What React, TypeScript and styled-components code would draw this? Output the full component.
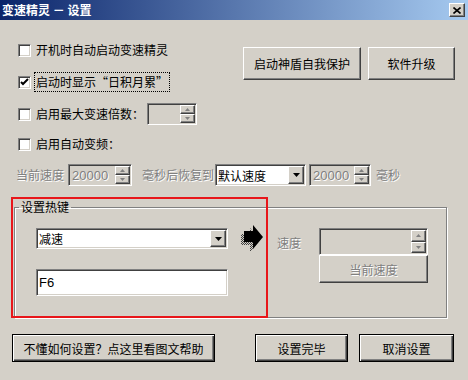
import React from 'react';
import styled, { createGlobalStyle, css } from 'styled-components';

const GlobalStyle = createGlobalStyle`
  html, body {
    margin: 0;
    padding: 0;
  }
  body {
    background: #d4d0c8;
    font-family: "Noto Sans CJK SC", "Liberation Sans", sans-serif;
    font-size: 12px;
    color: #000;
  }
  * {
    box-sizing: border-box;
  }
`;

// classic win32 bevels
const sunken = css`
  border: 1px solid;
  border-color: #808080 #fff #fff #808080;
  box-shadow: inset 1px 1px #404040, inset -1px -1px #d4d0c8;
  padding: 1px;
`;

const raised = css`
  border: 1px solid;
  border-color: #fff #404040 #404040 #fff;
  box-shadow: inset -1px -1px #808080, inset 1px 1px #d4d0c8;
`;

const disabledText = css`
  color: #808080;
  text-shadow: 1px 1px 0 #fff;
`;

const Window = styled.div`
  width: 468px;
  height: 380px;
  background: #d4d0c8;
  display: flex;
  flex-direction: column;
  overflow: hidden;
`;

const TitleBar = styled.div`
  height: 20px;
  flex: none;
  display: flex;
  align-items: center;
  justify-content: space-between;
  padding: 0 3px 0 2px;
  background: linear-gradient(to right, #0a246a, #a6caf0);
  color: #fff;
  font-weight: bold;
  font-size: 12px;
  line-height: 14px;
  white-space: pre;
`;

const CloseButton = styled.div`
  ${raised};
  width: 16px;
  height: 14px;
  background: #d4d0c8;
  display: flex;
  align-items: center;
  justify-content: center;
`;

const Body = styled.div`
  display: flex;
  flex-direction: column;
  padding: 20px 13px 0 12px;
`;

const TopArea = styled.div`
  display: flex;
  justify-content: space-between;
`;

const CheckColumn = styled.div`
  display: flex;
  flex-direction: column;
`;

const Row = styled.div<{ $gap?: number; $h?: number; $indent?: number }>`
  display: flex;
  align-items: center;
  height: ${({ $h }) => $h ?? 20}px;
  margin-top: ${({ $gap }) => $gap ?? 0}px;
  padding-left: ${({ $indent }) => $indent ?? 6}px;
  white-space: nowrap;
`;

const CheckBoxBox = styled.div`
  ${sunken};
  width: 13px;
  height: 13px;
  background: #fff;
  margin-right: 5px;
  display: flex;
  align-items: center;
  justify-content: center;
  padding: 0;
`;

const Label = styled.span<{ $disabled?: boolean; $focus?: boolean; $w?: number }>`
  line-height: 16px;
  ${({ $disabled }) => $disabled && disabledText};
  ${({ $w }) => $w && `width: ${$w}px;`};
  ${({ $focus }) =>
    $focus &&
    css`
      outline: 1px dotted #000;
      outline-offset: 1px;
    `};
`;

const TopButtons = styled.div`
  display: flex;
  gap: 7px;
  margin-top: 7px;
`;

const Button = styled.div<{ $w: number; $h?: number; $default?: boolean; $disabled?: boolean }>`
  ${raised};
  width: ${({ $w }) => $w}px;
  height: ${({ $h }) => $h ?? 33}px;
  display: flex;
  align-items: center;
  justify-content: center;
  background: #d4d0c8;
  white-space: nowrap;
  ${({ $disabled }) => $disabled && disabledText};
  ${({ $default }) =>
    $default &&
    css`
      border: 1px solid #000;
      box-shadow: inset 1px 1px #fff, inset -1px -1px #404040, inset -2px -2px #808080;
    `};
`;

const SpinBox = styled.div<{ $w: number; $h: number; $ml?: number }>`
  ${sunken};
  width: ${({ $w }) => $w}px;
  height: ${({ $h }) => $h}px;
  margin-left: ${({ $ml }) => $ml ?? 0}px;
  background: #d4d0c8;
  display: flex;
`;

const SpinValue = styled.span`
  flex: 1;
  display: flex;
  align-items: center;
  padding-left: 2px;
  ${disabledText};
  font-family: "Liberation Sans", sans-serif;
  font-size: 13px;
`;

const SpinButtons = styled.div`
  width: 15px;
  display: flex;
  flex-direction: column;
`;

const SpinButton = styled.div`
  ${raised};
  flex: 1;
  background: #d4d0c8;
  display: flex;
  align-items: center;
  justify-content: center;
`;

const Combo = styled.div<{ $w: number; $h: number; $ml?: number }>`
  ${sunken};
  width: ${({ $w }) => $w}px;
  height: ${({ $h }) => $h}px;
  margin-left: ${({ $ml }) => $ml ?? 0}px;
  background: #fff;
  display: flex;
`;

const ComboText = styled.span`
  flex: 1;
  display: flex;
  align-items: center;
  padding-left: 1px;
`;

const ComboButton = styled.div`
  ${raised};
  width: 16px;
  background: #d4d0c8;
  display: flex;
  align-items: center;
  justify-content: center;
`;

const TextBox = styled.div<{ $w: number; $h: number }>`
  ${sunken};
  width: ${({ $w }) => $w}px;
  height: ${({ $h }) => $h}px;
  background: #fff;
  display: flex;
  align-items: center;
  padding-left: 2px;
  font-family: "Liberation Sans", sans-serif;
  font-size: 13px;
`;

const GroupWrap = styled.div`
  position: relative;
  margin-top: 14px;
`;

const GroupBox = styled.fieldset`
  margin: 0 8px 0 2px;
  padding: 14px 0 21px 0;
  border: 1px solid #808080;
  box-shadow: inset 1px 1px #fff, 1px 1px #fff;
  min-width: 0;
`;

const GroupLegend = styled.legend`
  margin-left: 4px;
  padding: 0 2px;
  line-height: 14px;
  font-size: 12px;
`;

const GroupContent = styled.div`
  display: flex;
  align-items: flex-start;
  padding-left: 21px;
`;

const HotkeyColumn = styled.div`
  display: flex;
  flex-direction: column;
  gap: 20px;
  width: 192px;
`;

const ArrowMark = styled.svg`
  flex: none;
  margin: -4px 0 0 12px;
`;

const SpeedLabel = styled.span`
  ${disabledText};
  margin: 7px 0 0 13px;
  width: 24px;
  line-height: 16px;
`;

const SpeedColumn = styled.div`
  display: flex;
  flex-direction: column;
  margin-left: 18px;
`;

const Highlight = styled.div`
  position: absolute;
  left: -1px;
  top: -3px;
  width: 257px;
  height: 121px;
  border: 2px solid #e8161a;
  pointer-events: none;
`;

const BottomRow = styled.div`
  display: flex;
  align-items: center;
  margin-top: 16px;
`;

const Spacer = styled.div`
  flex: 1;
`;

const Check = () => (
  <svg width="9" height="9" viewBox="0 0 9 9">
    <path d="M1 4 L3 6 L8 1" stroke="#000" strokeWidth="2" fill="none" />
  </svg>
);

const Tri = ({ dir, color = '#000', size = 7 }: { dir: 'up' | 'down'; color?: string; size?: number }) => {
  const h = Math.ceil(size / 2);
  const d = dir === 'down' ? `M0 0 H${size} L${size / 2} ${h} Z` : `M0 ${h} H${size} L${size / 2} 0 Z`;
  return (
    <svg width={size} height={h} viewBox={`0 0 ${size} ${h}`}>
      <path d={d} fill={color} />
    </svg>
  );
};

const Spin = ({ w, h, ml, value }: { w: number; h: number; ml?: number; value?: string }) => (
  <SpinBox $w={w} $h={h} $ml={ml}>
    <SpinValue>{value}</SpinValue>
    <SpinButtons>
      <SpinButton>
        <Tri dir="up" color="#808080" size={5} />
      </SpinButton>
      <SpinButton>
        <Tri dir="down" color="#808080" size={5} />
      </SpinButton>
    </SpinButtons>
  </SpinBox>
);

const CheckBox = ({ checked }: { checked?: boolean }) => (
  <CheckBoxBox>{checked && <Check />}</CheckBoxBox>
);

const Arrow = () => (
  <ArrowMark width="24" height="28" viewBox="0 0 24 28">
    <defs>
      <pattern id="dither" width="2" height="2" patternUnits="userSpaceOnUse">
        <rect x="0" y="0" width="1" height="1" fill="#404040" />
        <rect x="1" y="1" width="1" height="1" fill="#404040" />
      </pattern>
    </defs>
    <path d="M1 10 H10 V4 L20 16 L10 28 V21 H1 Z" fill="url(#dither)" />
    <path d="M4 7 H13 V1 L23 13 L13 25 V18 H4 Z" fill="#000" />
  </ArrowMark>
);

export default function App() {
  return (
    <>
      <GlobalStyle />
      <Window>
        <TitleBar>
          <span>变速精灵 － 设置</span>
          <CloseButton>
            <svg width="8" height="7" viewBox="0 0 8 7">
              <path d="M0.5 0.5 L7.5 6.5 M7.5 0.5 L0.5 6.5" stroke="#000" strokeWidth="1.6" />
            </svg>
          </CloseButton>
        </TitleBar>
        <Body>
          <TopArea>
            <CheckColumn>
              <Row>
                <CheckBox />
                <Label>开机时自动启动变速精灵</Label>
              </Row>
              <Row $gap={12}>
                <CheckBox checked />
                <Label $focus>启动时显示“日积月累”</Label>
              </Row>
            </CheckColumn>
            <TopButtons>
              <Button $w={118}>启动神盾自我保护</Button>
              <Button $w={87}>软件升级</Button>
            </TopButtons>
          </TopArea>

          <Row $gap={11} $h={22}>
            <CheckBox />
            <Label>启用最大变速倍数：</Label>
            <Spin w={50} h={22} ml={3} />
          </Row>
          <Row $gap={9}>
            <CheckBox />
            <Label>启用自动变频：</Label>
          </Row>
          <Row $gap={10} $h={22} $indent={4}>
            <Label $disabled $w={48}>当前速度</Label>
            <Spin w={64} h={22} ml={4} value="20000" />
            <Label $disabled style={{ marginLeft: 10 }}>毫秒后恢复到</Label>
            <Combo $w={91} $h={22} $ml={1}>
              <ComboText>默认速度</ComboText>
              <ComboButton>
                <Tri dir="down" />
              </ComboButton>
            </Combo>
            <Spin w={62} h={22} ml={3} value="20000" />
            <Label $disabled style={{ marginLeft: 5 }}>毫秒</Label>
          </Row>

          <GroupWrap>
            <GroupBox>
              <GroupLegend>设置热键</GroupLegend>
              <GroupContent>
                <HotkeyColumn>
                  <Combo $w={192} $h={21}>
                    <ComboText>减速</ComboText>
                    <ComboButton>
                      <Tri dir="down" />
                    </ComboButton>
                  </Combo>
                  <TextBox $w={192} $h={27}>F6</TextBox>
                </HotkeyColumn>
                <Arrow />
                <SpeedLabel>速度</SpeedLabel>
                <SpeedColumn>
                  <Spin w={109} h={27} />
                  <Button $w={109} $h={28} $disabled>当前速度</Button>
                </SpeedColumn>
              </GroupContent>
            </GroupBox>
            <Highlight />
          </GroupWrap>

          <BottomRow>
            <Button $w={203} $h={28} $default>不懂如何设置？点这里看图文帮助</Button>
            <Spacer />
            <Button $w={93} $h={28} $default>设置完毕</Button>
            <Button $w={95} $h={28} $default style={{ marginLeft: 11, marginRight: 1 }}>取消设置</Button>
          </BottomRow>
        </Body>
      </Window>
    </>
  );
}
